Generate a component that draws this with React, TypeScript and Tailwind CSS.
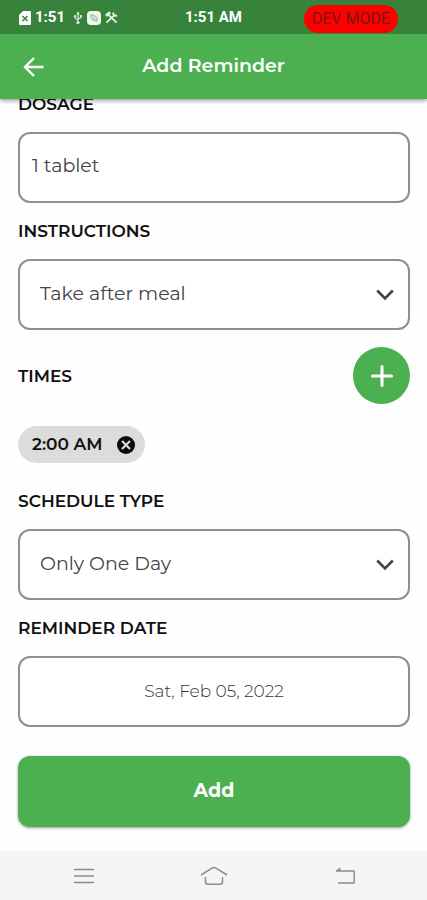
import { useState } from "react";
import type { ReactNode } from "react";

const labelClass = "block text-[17px] leading-6 font-semibold text-[#111]";
const fieldClass =
  "block w-full h-[71px] rounded-xl border-2 border-[#8f8f8f] bg-white text-[19px] text-[#444] outline-none focus:border-[#4caf50]";

function StatusBar() {
  return (
    <div className="grid h-[34px] grid-cols-[1fr_auto_1fr] items-center bg-[#38833c] pt-px font-[Roboto,sans-serif] text-white">
      <div className="flex items-center gap-1 pl-[19px]">
        <svg width="12" height="16" viewBox="0 0 12 16">
          <path d="M4 1h7a1 1 0 0 1 1 1v12a1 1 0 0 1-1 1H1a1 1 0 0 1-1-1V5z" fill="#fff" />
          <path d="M3.500 6l5 5M8.500 6l-5 5" stroke="#38833c" strokeWidth="1.600" />
        </svg>
        <span className="text-[15px] font-bold">1:51</span>
        <svg width="10" height="14" viewBox="0 0 12 16" className="ml-1" fill="none" stroke="#d5ead6" strokeWidth="1.400">
          <path d="M6 3v10M2.500 6v2.200L6 10.500M9.500 6v1.500L6 9.500" />
          <path d="M6 0l2.200 3.800H3.800z" fill="#d5ead6" stroke="none" />
          <circle cx="6" cy="13.500" r="1.900" fill="#d5ead6" stroke="none" />
          <circle cx="2.500" cy="5.800" r="1.500" fill="#d5ead6" stroke="none" />
          <path d="M8.200 4.500h2.600v2.600H8.200z" fill="#d5ead6" stroke="none" />
        </svg>
        <svg width="14" height="14" viewBox="0 0 14 14" fill="none">
          <rect width="14" height="14" rx="4" fill="#f1f7f1" />
          <path d="M3 4.500C3 3 5 2.500 6.500 3.500c2.500 1 4.500 3 4.500 5S9.500 11.500 8 10.500C5.500 10 3 7.500 3 4.500z" fill="#a9c9ab" />
          <path d="M5 5l1.500 3M7.500 5.500L9 9" stroke="#f1f7f1" />
        </svg>
        <svg width="13" height="13" viewBox="0 0 14 14" fill="none" stroke="#e4f2e5" strokeWidth="2">
          <path d="M4 4.500l8.500 8" />
          <path d="M1.500 12.500l8-7.500" />
          <path d="M1 5.200L5.500 1.500" strokeWidth="3" />
          <path d="M9 1.500c-.6 2.400 1 4.200 4 3.400" strokeWidth="2.200" />
        </svg>
      </div>
      <span className="text-[15px] font-bold">1:51 AM</span>
      <div className="flex justify-end self-end pr-[29px] pb-px">
        <span className="flex h-7 items-center rounded-full bg-[#fe0000] px-2 text-base text-[#7d1410]">DEV MODE</span>
      </div>
    </div>
  );
}

function Header() {
  return (
    <header className="sticky top-0 z-10 shadow-[0_2px_4px_rgba(0,0,0,0.35)]">
      <StatusBar />
      <div className="grid h-[65px] grid-cols-[1fr_auto_1fr] items-center bg-[#4db050] text-white">
        <button type="button" aria-label="Back" className="ml-[22px] w-6">
          <svg width="24" height="24" viewBox="0 0 24 24" fill="none" stroke="currentColor" strokeWidth="2.400">
            <path d="M21.500 12H4M12 3L3 12l9 9" />
          </svg>
        </button>
        <h1 className="text-[19px] font-semibold">Add Reminder</h1>
      </div>
    </header>
  );
}

type SelectFieldProps = {
  id: string;
  label: string;
  options: string[];
};

function SelectField({ id, label, options }: SelectFieldProps) {
  const [value, setValue] = useState(options[0]);

  return (
    <Field id={id} label={label}>
      <div className="relative">
        <select
          id={id}
          value={value}
          onChange={(e) => setValue(e.target.value)}
          className={`${fieldClass} appearance-none pr-12 pl-5`}
        >
          {options.map((option) => (
            <option key={option}>{option}</option>
          ))}
        </select>
        <svg
          width="18"
          height="12"
          viewBox="0 0 18 12"
          fill="none"
          stroke="#444"
          strokeWidth="2.600"
          className="pointer-events-none absolute top-[30px] right-4"
        >
          <path d="M1.200 1.500L9 9.500l7.800-8" />
        </svg>
      </div>
    </Field>
  );
}

function Field({ id, label, children }: { id: string; label: string; children: ReactNode }) {
  return (
    <div className="space-y-4">
      <label htmlFor={id} className={labelClass}>
        {label}
      </label>
      {children}
    </div>
  );
}

function NavBar() {
  return (
    <nav className="grid h-[49px] grid-cols-[1fr_auto_1fr] items-center bg-[#f5f5f5] text-[#8c8c8c]">
      <button type="button" aria-label="Recent apps" className="ml-[74px] w-5">
        <svg width="20" height="16" viewBox="0 0 20 16" stroke="currentColor" strokeWidth="1.500">
          <path d="M0 1.500h20M0 8h20M0 14.500h20" />
        </svg>
      </button>
      <button type="button" aria-label="Home">
        <svg width="28" height="20" viewBox="0 0 28 20" fill="none" stroke="currentColor" strokeWidth="1.500">
          <path d="M1 9l11-6.800q2-1.200 4 0L27 9" />
          <path d="M5.500 11v5q0 2.200 2.200 2.200h12.600q2.200 0 2.200-2.200v-5" />
        </svg>
      </button>
      <button type="button" aria-label="Back" className="mr-[72px] w-5 justify-self-end">
        <svg width="20" height="18" viewBox="0 0 20 18" fill="none" stroke="currentColor" strokeWidth="1.500">
          <path d="M1 4h17.500q.7 0 .7.700v10.600q0 .7-.7.700H3" />
          <path d="M0 4l5.500-3.500V4z" fill="currentColor" stroke="none" />
        </svg>
      </button>
    </nav>
  );
}

export default function App() {
  const [dosage, setDosage] = useState("1 tablet");
  const [times, setTimes] = useState(["2:00 AM"]);

  return (
    <div className="flex min-h-screen flex-col bg-[#fefefe] font-[Montserrat,Inter,sans-serif]">
      <Header />

      <main className="-mt-[7px] flex-1 pr-[17px] pb-6 pl-[18px]">
        <form className="space-y-4" onSubmit={(e) => e.preventDefault()}>
          <Field id="dosage" label="DOSAGE">
            <input
              id="dosage"
              type="text"
              value={dosage}
              onChange={(e) => setDosage(e.target.value)}
              className={`${fieldClass} px-3 pb-1`}
            />
          </Field>

          <SelectField
            id="instructions"
            label="INSTRUCTIONS"
            options={["Take after meal", "Take before meal", "Take with meal"]}
          />

          <div className="space-y-[22px] pt-px pb-[10px]">
            <div className="flex items-center justify-between">
              <h2 className={labelClass}>TIMES</h2>
              <button
                type="button"
                aria-label="Add time"
                onClick={() => setTimes([...times, "2:00 AM"])}
                className="flex h-[57px] w-[57px] items-center justify-center rounded-full bg-[#4db050]"
              >
                <svg width="22" height="22" viewBox="0 0 22 22" stroke="#fff" strokeWidth="3" strokeLinecap="round">
                  <path d="M11 1.500v19M1.500 11h19" />
                </svg>
              </button>
            </div>
            <ul className="flex flex-wrap gap-2">
              {times.map((time, i) => (
                <li key={i} className="flex h-[37px] items-center gap-[14px] rounded-full bg-[#dcdcdc] pr-[10px] pl-[14px]">
                  <span className="text-[17px] font-semibold text-[#111]">{time}</span>
                  <button
                    type="button"
                    aria-label={`Remove ${time}`}
                    onClick={() => setTimes(times.filter((_, idx) => idx !== i))}
                  >
                    <svg width="18" height="18" viewBox="0 0 18 18">
                      <circle cx="9" cy="9" r="9" fill="#0c0c0c" />
                      <path d="M5 5l8 8M13 5l-8 8" stroke="#dcdcdc" strokeWidth="2.200" />
                    </svg>
                  </button>
                </li>
              ))}
            </ul>
          </div>

          <SelectField id="schedule" label="SCHEDULE TYPE" options={["Only One Day", "Every Day", "Specific Days"]} />

          <Field id="date" label="REMINDER DATE">
            <button
              id="date"
              type="button"
              className="block h-[71px] w-full rounded-xl border-2 border-[#8f8f8f] bg-white text-[17px] font-light text-[#333]"
            >
              Sat, Feb 05, 2022
            </button>
          </Field>

          <div className="pt-[13px]">
            <button
              type="submit"
              className="h-[71px] w-full rounded-xl bg-[#4db050] text-[19px] font-bold text-white shadow-[0_1px_3px_rgba(0,0,0,0.4)]"
            >
              Add
            </button>
          </div>
        </form>
      </main>

      <NavBar />
    </div>
  );
}
